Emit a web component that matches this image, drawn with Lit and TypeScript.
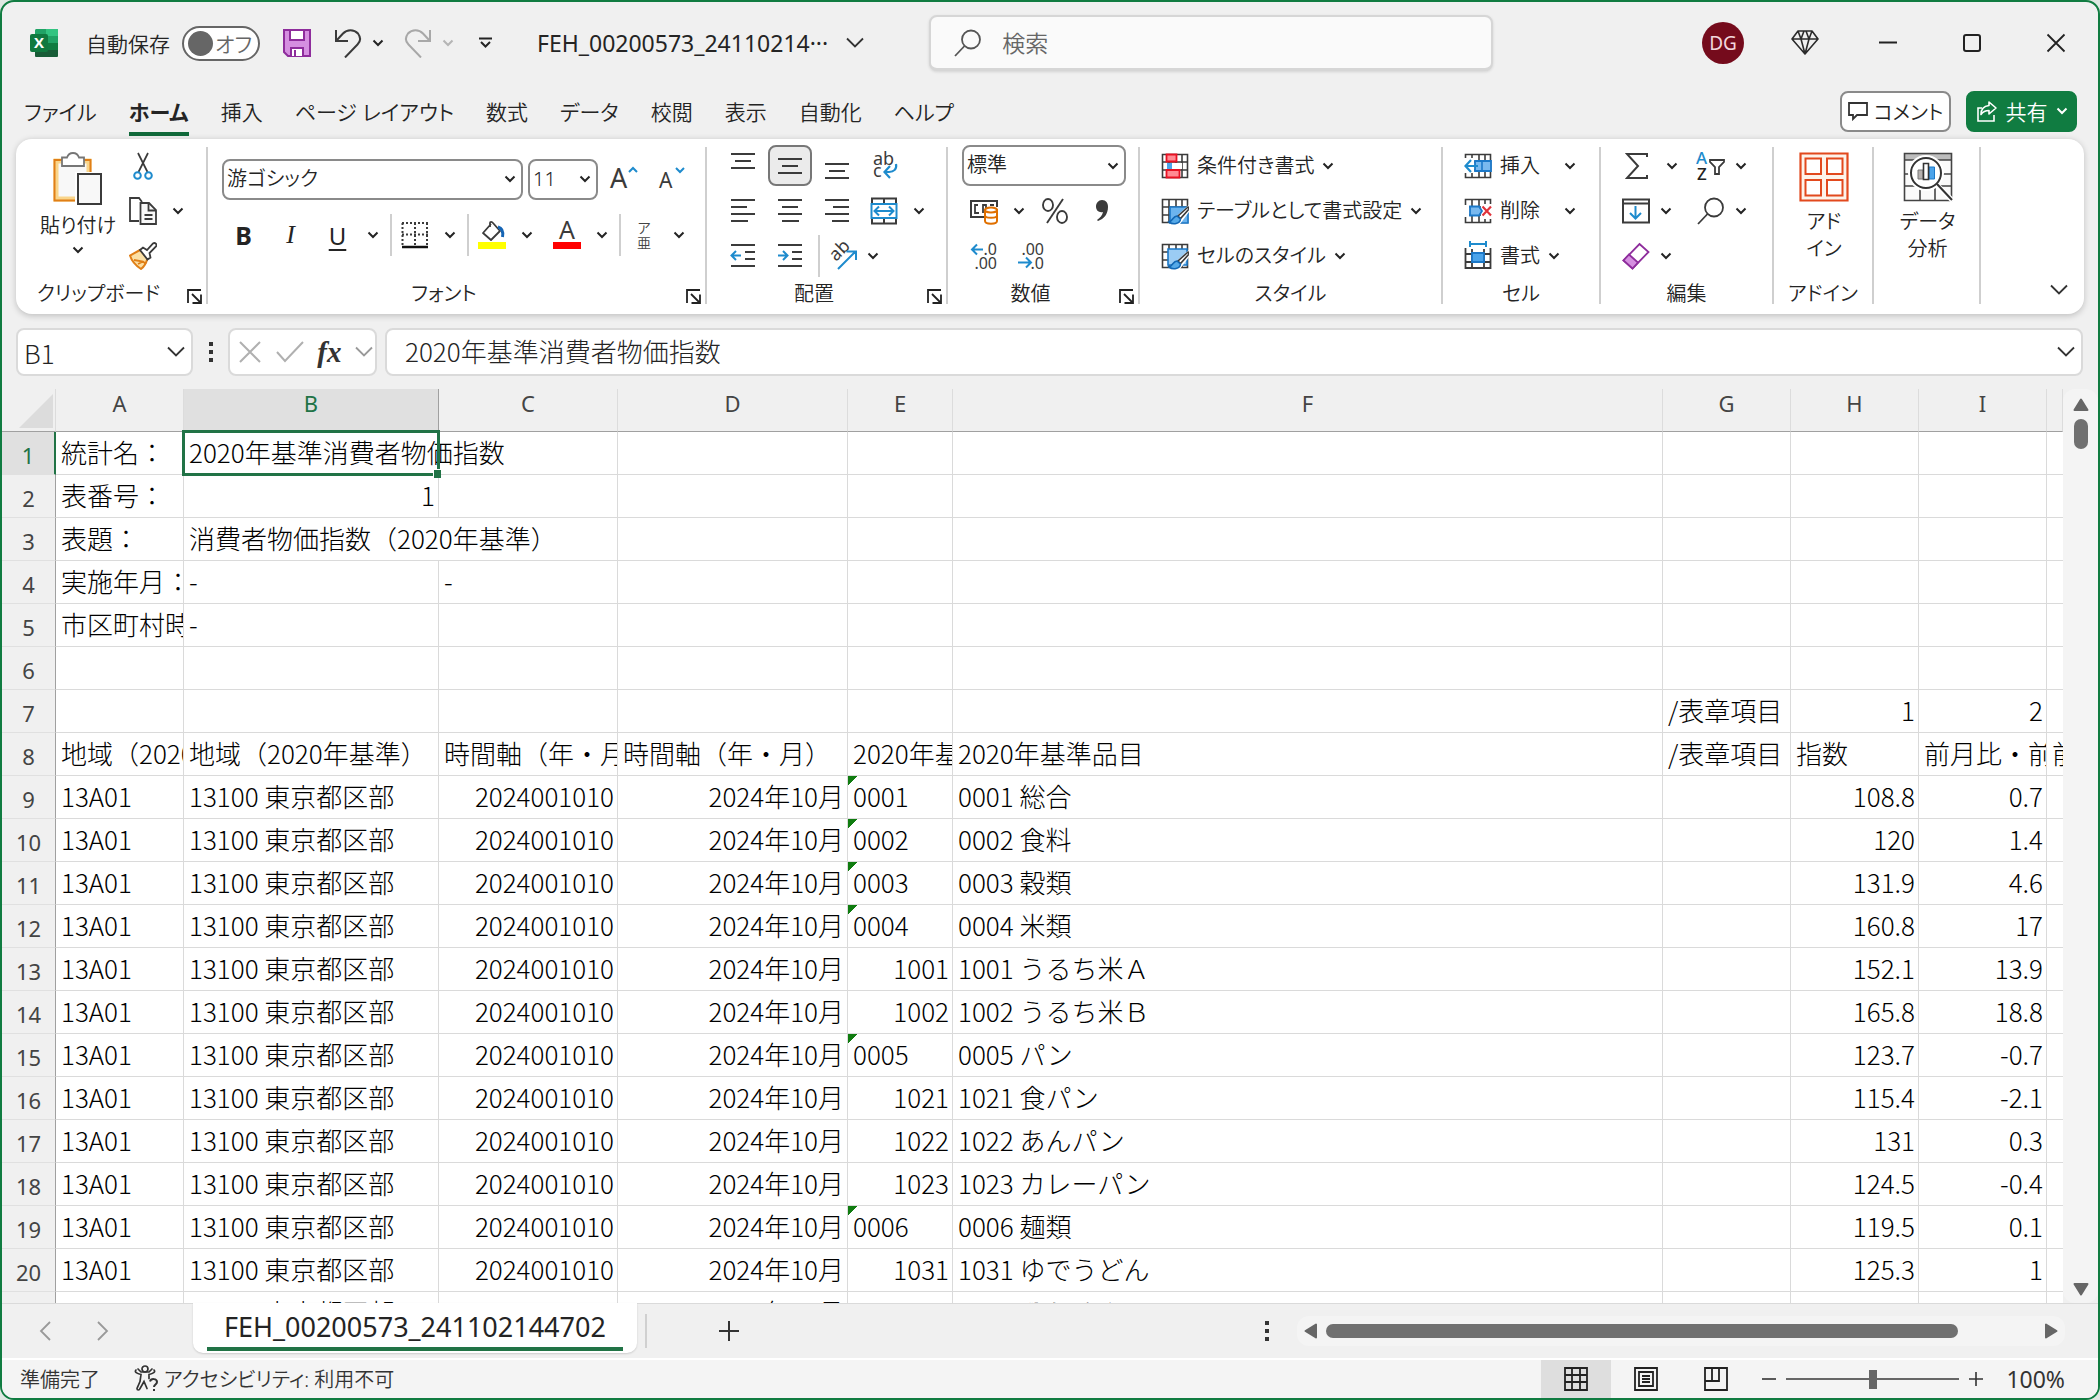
import { LitElement, html, css, svg, nothing } from "lit";
import { customElement } from "lit/decorators.js";
import { classMap } from "lit/directives/class-map.js";

const base = css`
  *, *::before, *::after { box-sizing: border-box; }
  button, input, select {
    font: inherit; color: inherit; margin: 0; padding: 0; border: 0; background: none;
    border-radius: 0; outline: none; font-feature-settings: inherit;
  }
  button { display: flex; align-items: center; justify-content: center; white-space: nowrap; }
  select { appearance: none; }
  svg { display: block; flex: none; }
`;

/* ---------- icons ---------- */
const icon = (w: number, h: number, body: unknown) =>
  html`<svg width=${w} height=${h} viewBox="0 0 ${w} ${h}" fill="none" aria-hidden="true">${body}</svg>`;

const caret = (color = "#242424") =>
  icon(12, 8, svg`<path d="M1.5 1.5 6 6l4.5-4.5" stroke=${color} stroke-width="2"/>`);
const chevron = (color = "#333") =>
  icon(18, 12, svg`<path d="M1 1.5 9 9.5l8-8" stroke=${color} stroke-width="1.8"/>`);

const K = "#3b3b3b";
const B = "#1e8bcd";

const logo = icon(28, 28, svg`
  <path d="M8 0h19a1 1 0 0 1 1 1v7H5V2a2 2 0 0 1 3-2z" fill="#21a366"/>
  <path d="M16 0h11a1 1 0 0 1 1 1v6H16z" fill="#33c481"/>
  <path d="M5 7h23v8H5z" fill="#107c41"/><path d="M16 7h12v7H16z" fill="#21a366"/>
  <path d="M5 14h23v13a1 1 0 0 1-1 1H6a1 1 0 0 1-1-1z" fill="#185c37"/>
  <path d="M16 14h12v7H16z" fill="#107c41"/>
  <rect y="5" width="18" height="18" rx="2" fill="#10793f"/>
  <text x="9" y="19" text-anchor="middle" font-family="Open Sans" font-weight="700" font-size="15" fill="#fff">X</text>`);

const save = icon(28, 28, svg`
  <path d="M1 1h26v26H5l-4-4z" fill="#d58fe0" stroke="#8e2d9c" stroke-width="2"/>
  <path d="M7 1h14v10H7z" fill="#fff" stroke="#8e2d9c" stroke-width="2"/>
  <path d="M8 27v-8h12v8" fill="#fff" stroke="#8e2d9c" stroke-width="2"/>
  <path d="M12 21v6" stroke="#8e2d9c" stroke-width="2"/>`);
const undo = icon(28, 30, svg`<path d="M2 2v11h12M2.500 12.500 9 5.500C13 1 20 1 24 5.500c3 4 2.500 8-.500 11L11 29.500" stroke="#3b3b3b" stroke-width="2"/>`);
const redo = icon(28, 30, svg`<path d="M26 2v11H14M25.500 12.500 19 5.500C15 1 8 1 4 5.500c-3 4-2.500 8 .500 11L17 29.500" stroke="#a8a8a8" stroke-width="2"/>`);
const qat = icon(14, 12, svg`<path d="M0 1.500h13" stroke="#242424" stroke-width="2"/><path d="M2 5l4.500 4.500L11 5" stroke="#242424" stroke-width="2"/>`);
const search = (c: string) => icon(28, 28, svg`<circle cx="17" cy="10.500" r="9" stroke=${c} stroke-width="1.8"/><path d="M10.500 17 1 27" stroke=${c} stroke-width="1.8"/>`);
const diamond = icon(28, 28, svg`<path d="M7 2h14l6 8-13 15L1 10zM1 10h26M7 2l3 8 4 15 4-15 3-8M10 10l3-8M18 10l-3-8" stroke="#2b2b2b" stroke-width="1.6" stroke-linejoin="round"/>`);
const minimize = icon(20, 20, svg`<path d="M1 9.500h18" stroke="#222" stroke-width="2"/>`);
const maximize = icon(20, 20, svg`<rect x="2" y="2" width="16" height="16" rx="2" stroke="#222" stroke-width="2"/>`);
const closeX = icon(20, 20, svg`<path d="M1.500 1.500l17 17M18.500 1.500l-17 17" stroke="#222" stroke-width="1.8"/>`);
const comment = icon(20, 20, svg`<path d="M1 2h18v12H9l-4 4v-4H1z" stroke="#333" stroke-width="1.8"/>`);
const share = icon(22, 22, svg`<path d="M6 8H2v13h16v-6" stroke="#fff" stroke-width="1.6"/><path d="M13 2l7 6-7 6v-3.500c-4 0-6 1-8 4 0-5 3-8.500 8-9z" stroke="#fff" stroke-width="1.6" stroke-linejoin="round"/>`);

const paste = icon(50, 54, svg`
  <path d="M3 9h33v38H3z" fill="#f8f8f8" stroke="#f9d58b" stroke-width="5"/>
  <path d="M12 8H1.500v40.500H24M28 8h9.500v12" stroke="#e07f17" stroke-width="2"/>
  <path d="M9 5.500h5C15 2.500 17 1 20 1s5 1.500 6 4.500h5V14H9z" fill="#fff" stroke="#767676" stroke-width="1.8"/>
  <path d="M22 20h27v34H22z" fill="#fff"/>
  <path d="M25 22h23v30H25z" fill="#f8f8f8" stroke="#3b3b3b" stroke-width="2"/>`);
const cut = icon(28, 28, svg`
  <path d="M9 1l9.500 19M19 1 9.500 20" stroke=${K} stroke-width="1.7"/>
  <circle cx="8.500" cy="23.500" r="3.300" stroke=${B} stroke-width="2"/><circle cx="19.500" cy="23.500" r="3.300" stroke=${B} stroke-width="2"/>`);
const copy = icon(28, 28, svg`
  <path d="M10 24H1V1h9l3 4" stroke=${K} stroke-width="1.8"/>
  <path d="M11.500 6H20l7 7v14H11.500z" fill="#f8f8f8" stroke=${K} stroke-width="1.8"/>
  <path d="M19.500 6v7.500H27M15.500 18h8M15.500 22h8" stroke=${K} stroke-width="1.8"/>`);
const painter = icon(28, 28, svg`
  <path d="M11 8 1 13.500c1.500 5 5 9.500 11 13.500 4-3 5.500-6.500 6.500-11z" fill="#fbe0a5" stroke="#e07f17" stroke-width="2"/>
  <path d="M5 18l9 1.500 3 2.500M9 22l5-2.500" stroke="#e07f17" stroke-width="1.8"/>
  <path d="M11 8l3-2.500 4 2.500 6-6.500c2-1.500 4.500 1 3 3L20.500 11l1 4.500-3 2z" fill="#fff" stroke=${K} stroke-width="1.8"/>`);
const launcher = icon(15, 15, svg`<path d="M1 14V1h13" stroke="#222" stroke-width="1.8"/><path d="M5 5l8 8M14 5.500V14H5.500" stroke="#222" stroke-width="1.8"/>`);

const growA = icon(30, 28, svg`<text x="1" y="23" font-family="Noto Sans" font-weight="400" font-size="27" fill=${K}>A</text><path d="M20 7l4-4 4 4" stroke=${B} stroke-width="2"/>`);
const shrinkA = icon(28, 28, svg`<text x="2" y="23" font-family="Noto Sans" font-weight="400" font-size="21" fill=${K}>A</text><path d="M19 3l4 4 4-4" stroke=${B} stroke-width="2"/>`);
const borders = icon(28, 28, svg`
  <path d="M1 2h26M1 13.500h26M1.500 2v22M14 2v22M26 2v22" stroke=${K} stroke-width="2" stroke-dasharray="2 2"/>
  <path d="M1 26h26" stroke="#111" stroke-width="2.500"/>`);
const fillColor = icon(28, 30, svg`
  <path d="M13 4 5 13l8 7 9-9-7-8c-1-1.500-3-1.500-3 0v4" stroke=${K} stroke-width="1.8" stroke-linejoin="round"/>
  <path d="M20 7c4 1 5.500 4 4.500 10" stroke="#1565b5" stroke-width="3"/>
  <path d="M0 22h28v7H0z" fill="#ff0"/>`);
const fontColor = icon(28, 30, svg`<text x="14" y="19" text-anchor="middle" font-family="Noto Sans" font-weight="400" font-size="25" fill=${K}>A</text><path d="M0 22h28v7H0z" fill="#f00"/>`);

const lines = (rows: [number, number, number][]) =>
  icon(26, 28, rows.map(([x, y, w]) => svg`<path d="M${x} ${y}h${w}" stroke=${K} stroke-width="2"/>`));
const topAlign = lines([[1, 2, 24], [5, 9, 16], [1, 16, 24]]);
const midAlign = lines([[1, 7, 24], [5, 14, 16], [1, 21, 24]]);
const botAlign = lines([[1, 12, 24], [5, 19, 16], [1, 26, 24]]);
const leftAlign = lines([[1, 3, 24], [1, 10, 16], [1, 17, 24], [1, 24, 17]]);
const centerAlign = lines([[1, 3, 24], [5, 10, 16], [1, 17, 24], [5, 24, 17]]);
const rightAlign = lines([[1, 3, 24], [9, 10, 16], [1, 17, 24], [8, 24, 17]]);
const indent = (arrow: string) => icon(26, 28, svg`
  <path d="M1 3h24M15 10h10M15 17h10M1 24h24" stroke=${K} stroke-width="2"/><path d=${arrow} stroke=${B} stroke-width="2"/>`);
const outdentIcon = indent("M11 13.500H2M6 9l-4.500 4.500L6 18");
const indentIcon = indent("M1 13.500h9M6 9l4.500 4.500L6 18");
const wrapText = icon(28, 30, svg`
  <text x="3" y="14" font-family="Noto Sans" font-weight="400" font-size="18" fill=${K}>ab</text>
  <text x="3" y="26" font-family="Noto Sans" font-weight="400" font-size="18" fill=${K}>c</text>
  <path d="M26 13c1 5-2 8-7 8h-4M20 15l-5.500 6 5.500 6" stroke=${B} stroke-width="2.200"/>`);
const merge = icon(28, 28, svg`
  <path d="M2 1.500h24v25H2zM14 1v6M14 21v6" stroke=${K} stroke-width="2"/>
  <path d="M1.500 7h25v14h-25z" fill="#fff" stroke=${B} stroke-width="2"/>
  <path d="M5 14h18M9 9.500 4.500 14 9 18.500M19 9.500l4.500 4.500-4.500 4.500" stroke=${B} stroke-width="2"/>`);
const orient = icon(30, 30, svg`
  <text x="8" y="21" transform="rotate(-45 8 21)" font-family="Noto Sans" font-weight="400" font-size="18" fill=${K}>ab</text>
  <path d="M10 28 27 11M18.500 10.500H28V19" stroke=${B} stroke-width="2"/>`);

const currency = icon(28, 28, svg`
  <path d="M14 20H1V4h26v6" stroke=${K} stroke-width="2"/>
  <path d="M8 8H5v8h4M13 16V8h3v3M20 8h4" stroke=${K} stroke-width="1.8"/>
  <path d="M15 13v11c0 3.500 12 3.500 12 0V13z" fill="#fff" stroke="#e07000" stroke-width="2"/>
  <ellipse cx="21" cy="13" rx="6" ry="2.500" fill="#fff" stroke="#e07000" stroke-width="2"/>
  <path d="M15 18.500c0 3 12 3 12 0" stroke="#e07000" stroke-width="2"/>`);
const percent = icon(28, 28, svg`
  <ellipse cx="7" cy="8" rx="5" ry="6" stroke=${K} stroke-width="1.900"/><ellipse cx="21" cy="20" rx="5" ry="6" stroke=${K} stroke-width="1.900"/>
  <path d="M22 2 6 26" stroke=${K} stroke-width="1.900"/>`);
const comma = icon(16, 24, svg`<path d="M8 1c4 0 6 3 6 7 0 7-4 12-10 14l-1-1c3-2 5.500-5 6-8-4 1-7-1.500-7-5.500C2 4 4.500 1 8 1z" fill=${K}/>`);
const decInc = icon(28, 30, svg`
  <text x="27" y="14" text-anchor="end" font-family="Noto Sans" font-weight="400" font-size="16" fill=${K}>.0</text>
  <text x="27" y="28" text-anchor="end" font-family="Noto Sans" font-weight="400" font-size="16" fill=${K}>.00</text>
  <path d="M13 8.500H2M7 3.500l-5 5 5 5" stroke=${B} stroke-width="2"/>`);
const decDec = icon(28, 30, svg`
  <text x="27" y="14" text-anchor="end" font-family="Noto Sans" font-weight="400" font-size="16" fill=${K}>.00</text>
  <text x="27" y="28" text-anchor="end" font-family="Noto Sans" font-weight="400" font-size="16" fill=${K}>.0</text>
  <path d="M1 21.500h13M9 16.500l5 5-5 5" stroke=${B} stroke-width="2"/>`);

const frame = svg`<path d="M1.500 2.500h25v23h-25zM1 10h26M1 18h26M8 2v24M15 2v24M21 2v24" stroke=${K} stroke-width="1.6"/>`;
const brush = svg`
  <path d="M30 6 18 17l-9 10h10l9-12z" fill="#fff"/>
  <path d="M27 10 17 19l2.500 2.500L28 12z" fill="#fff" stroke=${K} stroke-width="1.6"/>
  <path d="M16 19c-4 0-4 5-8 6 4 3 11 2 11.500-3z" fill="#55a9e8" stroke="#1267b4" stroke-width="1.6"/>`;
const condFormat = icon(28, 28, svg`
  <path d="M1 2h26v24H1z" fill="#fff"/>${frame}
  <path d="M5.500 2.500h10v7h-10zM5.500 18h13v7.500h-13z" fill="#ff8a93" stroke="#e81123" stroke-width="1.8"/>
  <path d="M6 11h5v6H6z" fill="#4aa3ea"/><path d="M12 11h9v6h-9z" fill="#fff"/>`);
const tableFormat = icon(28, 28, svg`${frame}<path d="M9 10h18v16H9z" fill="#6cb4ee" stroke="#1b78c8" stroke-width="1.6"/>${brush}`);
const cellStyles = icon(28, 28, svg`${frame}<path d="M7 7h19v16H7z" fill="#9bccf4" stroke="#1b78c8" stroke-width="1.6"/>${brush}`);
const insertCells = icon(28, 28, svg`${frame}
  <path d="M11 9h16v10H11z" fill="#79b9ef" stroke="#1b78c8" stroke-width="1.8"/><path d="M18 9v10" stroke="#1b78c8" stroke-width="1.6"/>
  <path d="M0 6h10v15H0z" fill="#fff"/><path d="M14 14H1.500M7 8l-5.500 6L7 20" stroke=${B} stroke-width="2.200"/>`);
const deleteCells = icon(28, 28, svg`${frame}<path d="M0 8h5v12H0zM17 7h11v15H17z" fill="#fff"/>
  <path d="M6 9.500h9l3 4.500-3 4.500H6z" fill="#79b9ef" stroke="#1b78c8" stroke-width="1.8"/>
  <path d="M18.500 9.500l8.500 9M27 9.500l-8.500 9" stroke="#e0343c" stroke-width="2.200"/>`);
const formatCells = icon(28, 30, svg`
  <path d="M1.500 7v20h25V7M1 13h26M1 21h26M8 8v20M20 8v20" stroke=${K} stroke-width="1.8"/>
  <path d="M8 12h12v9H8z" fill="#4aa3ea" stroke="#1b78c8" stroke-width="1.8"/>
  <path d="M6 3h16M6 0v6M22 0v6" stroke=${B} stroke-width="2"/>`);

const sigma = icon(24, 28, svg`<path d="M22 5V2H2l11 12L2 26h20v-3" stroke=${K} stroke-width="2"/>`);
const sortFilter = icon(30, 30, svg`
  <text x="0" y="13" font-family="Noto Sans" font-weight="500" font-size="17" fill=${B}>A</text>
  <text x="1" y="29" font-family="Noto Sans" font-weight="500" font-size="17" fill="#222">Z</text>
  <path d="M14 9h14v2l-5 5v7h-4v-7l-5-5z" stroke=${K} stroke-width="1.8"/>`);
const fillDown = icon(28, 28, svg`<path d="M1 2.500h26v23H1zM1 6.500h26" stroke=${K} stroke-width="2"/><path d="M13.500 9v12M8 16l5.500 5.500L19 16" stroke=${B} stroke-width="2"/>`);
const eraser = icon(28, 28, svg`
  <path d="M17.500 2 26.500 10 10.500 26.500 1.500 18.500z" fill="#fff" stroke="#8e2d9c" stroke-width="1.8"/>
  <path d="M7 12.500 16 20.500 10.500 26.500 1.500 18.500z" fill="#d58fe0" stroke="#8e2d9c" stroke-width="1.8"/>`);
const addin = icon(50, 50, svg`
  <path d="M1.500 1.500h47v47h-47z" fill="#fdf3ea" stroke="#e2491d" stroke-width="2.200"/>
  <path d="M6.500 6.500h15.500v15.500H6.500zM28 6.500h15.500v15.500H28zM6.500 28h15.500v15.500H6.500zM28 28h15.500v15.500H28z" fill="#fff" stroke="#e2491d" stroke-width="2"/>`);
const analyze = icon(50, 50, svg`
  <path d="M1 1h48v48H1z" fill="#fafafa"/><path d="M1 1h48v7H1z" fill="#bdbdbd"/>
  <path d="M1.500 1.500h47v47h-47zM1 8h48M1 22h48M1 34h48M17 34v14M32 34v14" stroke="#444" stroke-width="1.6"/>
  <circle cx="23" cy="21" r="18" fill="#fff"/>
  <circle cx="23" cy="21" r="15" fill="#fff" stroke="#333" stroke-width="2"/>
  <path d="M15 18h5v9h-5z" fill="#b5b0ae" stroke="#777"/><path d="M26 15h5.500v12H26z" fill="#4aa3ea" stroke="#1b78c8"/>
  <path d="M20.500 11.500h5v16h-5z" fill="#fff" stroke="#333" stroke-width="1.6"/>
  <path d="M34 33 50 49" stroke="#fff" stroke-width="5"/><path d="M34 32 49 48" stroke="#333" stroke-width="2"/>`);

/* ---------- ribbon ---------- */
const btn = (cls: string, label: string, body: unknown) =>
  html`<button class=${cls} type="button" aria-label=${label}>${body}</button>`;
const drop = (label: string) => btn("drop", `${label}のオプション`, caret());

@customElement("ribbon-bar")
export class RibbonBar extends LitElement {
  static styles = [base, css`
    :host { display: flex; background: #fff; border-radius: 16px; box-shadow: 0 2px 6px rgba(0, 0, 0, .2); border-top: 1px solid #e0e0e0; padding: 4px 0 0; height: 176px; font-size: 20px; color: #242424; }
    .group { position: relative; display: flex; flex-direction: column; flex: none; }
    .group::after { content: ""; position: absolute; right: 0; top: 4px; bottom: 10px; width: 2px; background: #cfcfcf; }
    .rows { display: grid; grid-template-rows: repeat(3, 45px); padding-left: 12px; }
    .rows.two { grid-template-rows: repeat(2, 56px); padding-top: 8px; height: 135px; }
    .rows.flush { padding-left: 0; }
    .row { display: flex; align-items: center; }
    .foot { display: flex; align-items: center; height: 36px; padding-right: 6px; }
    .name { flex: 1; text-align: center; line-height: 28px; padding: 0 6px 4px 0; white-space: nowrap; }
    .foot.plain { padding: 0; }
    .plain .name { padding-right: 2px; }
    .clip { width: 192px; } .font { width: 499px; } .align { width: 241px; } .number { width: 192px; }
    .style { width: 303px; } .cells { width: 158px; } .edit { width: 173px; } .addin { width: 100px; } .data { width: 107px; }
    .slot { width: 47px; height: 41px; } .icon { width: 36px; height: 41px; } .drop { width: 24px; height: 41px; }
    .on { width: 44px; margin: 0 1px 0 2px; border: 2px solid #777; border-radius: 8px; background: #ebebeb; }
    .bar { width: 2px; height: 42px; background: #cfcfcf; margin: 0 5px; }
    .split { display: flex; gap: 5px; }
    .shift { margin-left: 10px; }
    .b { font-weight: 700; font-size: 25px; } .i { font: italic 26px "Liberation Serif", serif; } .u { font-size: 24px; font-weight: 400; text-decoration: underline; text-underline-offset: 4px; }
    .field { display: grid; align-items: center; height: 41px; border: 2px solid #8a8a8a; border-radius: 8px; background: #fff; }
    .field select { grid-area: 1 / 1; padding: 0 0 2px 3px; height: 37px; }
    .field svg { grid-area: 1 / 1; justify-self: end; margin-right: 5px; pointer-events: none; }
    .face { width: 301px; margin-left: 2px; } .size { width: 70px; margin: 0 2px 0 5px; } .format { width: 164px; margin-left: 2px; }
    .paste-area { display: flex; padding-left: 20px; gap: 5px; }
    .paste { flex-direction: column; width: 84px; height: 135px; justify-content: flex-start; padding-top: 9px; line-height: 32px; gap: 4px; }
    .ruby { flex-direction: column; line-height: 15px; font-size: 14px; color: #444; }
    .cmds { padding-left: 21px; }
    .cmd { gap: 8px; height: 41px; }
    .cmd span { padding-bottom: 3px; }
    .far { margin-left: 18px; }
    .pair { display: grid; grid-template-columns: 80px 60px; align-items: center; }
    .near { padding-left: 5px; }
    .big { flex-direction: column; justify-content: flex-start; white-space: normal; height: 135px; padding-top: 9px; line-height: 27px; }
    .big span { margin-top: 6px; }
    .end { flex: 1; display: flex; justify-content: flex-end; align-items: flex-end; padding: 0 16px 18px 0; }
  `];

  private foot(name: string, launch = true) {
    return html`<div class=${classMap({ foot: true, plain: !launch })}><span class="name">${name}</span>
      ${launch ? btn("", `${name}の設定`, launcher) : nothing}</div>`;
  }

  render() {
    return html`
      <section class="group clip">
        <div class="paste-area">
          <button class="paste" type="button">${paste}<span>貼り付け</span>${caret()}</button>
          <div class="rows flush">
            <div class="row">${btn("icon", "切り取り", cut)}</div>
            <div class="row split">${btn("icon", "コピー", copy)}${drop("コピー")}</div>
            <div class="row">${btn("icon", "書式のコピー", painter)}</div>
          </div>
        </div>
        ${this.foot("クリップボード")}
      </section>
      <section class="group font">
        <div class="rows two">
          <div class="row">
            <div class="field face"><select aria-label="フォント名"><option>游ゴシック</option></select>${caret()}</div>
            <div class="field size"><select aria-label="フォント サイズ"><option>11</option></select>${caret()}</div>
            ${btn("slot", "拡大", growA)}${btn("slot", "縮小", shrinkA)}
          </div>
          <div class="row">
            ${btn("slot b", "太字", "B")}${btn("slot i", "斜体", "I")}${btn("slot u", "下線", "U")}${drop("下線")}
            <span class="bar"></span>
            <span class="split">${btn("icon", "罫線", borders)}${drop("罫線")}</span><span class="bar"></span>
            <span class="split">${btn("icon", "塗りつぶし", fillColor)}${drop("塗りつぶし")}</span>
            <span class="split shift">${btn("icon", "文字色", fontColor)}${drop("文字色")}</span><span class="bar"></span>
            <span class="split">${btn("icon ruby", "ふりがな", html`<span>ア</span><span>亜</span>`)}${drop("ふりがな")}</span>
          </div>
        </div>
        ${this.foot("フォント")}
      </section>
      <section class="group align">
        <div class="rows">
          <div class="row">${btn("slot", "上揃え", topAlign)}${btn("slot on", "中央", midAlign)}${btn("slot", "下揃え", botAlign)}${btn("slot", "折り返し", wrapText)}</div>
          <div class="row">${btn("slot", "左揃え", leftAlign)}${btn("slot", "中央揃え", centerAlign)}${btn("slot", "右揃え", rightAlign)}${btn("slot", "結合", merge)}${drop("結合")}</div>
          <div class="row">${btn("slot", "字下げ解除", outdentIcon)}${btn("slot", "字下げ", indentIcon)}<span class="bar"></span>${btn("icon", "方向", orient)}${drop("方向")}</div>
        </div>
        ${this.foot("配置")}
      </section>
      <section class="group number">
        <div class="rows">
          <div class="row"><div class="field format"><select aria-label="表示形式"><option>標準</option></select>${caret()}</div></div>
          <div class="row">${btn("slot", "通貨", currency)}${drop("通貨")}${btn("slot", "パーセント", percent)}${btn("slot", "桁区切り", comma)}</div>
          <div class="row">${btn("slot", "小数点以下を増やす", decInc)}${btn("slot", "小数点以下を減らす", decDec)}</div>
        </div>
        ${this.foot("数値")}
      </section>
      <section class="group style">
        <div class="rows cmds">
          <div class="row"><button class="cmd" type="button">${condFormat}<span>条件付き書式</span>${caret()}</button></div>
          <div class="row"><button class="cmd" type="button">${tableFormat}<span>テーブルとして書式設定</span>${caret()}</button></div>
          <div class="row"><button class="cmd" type="button">${cellStyles}<span>セルのスタイル</span>${caret()}</button></div>
        </div>
        ${this.foot("スタイル", false)}
      </section>
      <section class="group cells">
        <div class="rows cmds">
          <div class="row"><button class="cmd" type="button">${insertCells}<span>挿入</span></button><span class="far">${drop("挿入")}</span></div>
          <div class="row"><button class="cmd" type="button">${deleteCells}<span>削除</span></button><span class="far">${drop("削除")}</span></div>
          <div class="row"><button class="cmd" type="button">${formatCells}<span>書式</span>${caret()}</button></div>
        </div>
        ${this.foot("セル", false)}
      </section>
      <section class="group edit">
        <div class="rows">
          <div class="pair"><div class="row">${btn("slot", "合計", sigma)}${drop("合計")}</div><div class="row">${btn("icon", "並べ替え", sortFilter)}${drop("並べ替え")}</div></div>
          <div class="pair"><div class="row near">${btn("icon", "フィル", fillDown)}${drop("フィル")}</div><div class="row">${btn("icon", "検索", search(K))}${drop("検索")}</div></div>
          <div class="pair"><div class="row near">${btn("icon", "クリア", eraser)}${drop("クリア")}</div></div>
        </div>
        ${this.foot("編集", false)}
      </section>
      <section class="group addin">
        <button class="big" type="button">${addin}<span>アド<br>イン</span></button>
        ${this.foot("アドイン", false)}
      </section>
      <section class="group data">
        <button class="big" type="button">${analyze}<span>データ<br>分析</span></button>
      </section>
      <div class="end">${btn("", "リボンを折りたたむ", chevron())}</div>`;
  }
}

/* ---------- worksheet ---------- */
type Row = (string | number)[];
const HEADS = ["A", "B", "C", "D", "E", "F", "G", "H", "I", ""];
const item = (code: string, name: string, index: number, rate: number): Row => [
  "13A01", "13100 東京都区部", 2024001010, "2024年10月", code.startsWith("0") ? code : Number(code), `${code} ${name}`, "", index, rate, "",
];
const ROWS: Row[] = [
  ["統計名：", "2020年基準消費者物価指数", "", "", "", "", "", "", "", ""],
  ["表番号：", 1, "", "", "", "", "", "", "", ""],
  ["表題：", "消費者物価指数（2020年基準）", "", "", "", "", "", "", "", ""],
  ["実施年月：", "-", "-", "", "", "", "", "", "", ""],
  ["市区町村時", "-", "", "", "", "", "", "", "", ""],
  ["", "", "", "", "", "", "", "", "", ""],
  ["", "", "", "", "", "", "/表章項目", 1, 2, ""],
  ["地域（2020", "地域（2020年基準）", "時間軸（年・月", "時間軸（年・月）", "2020年基", "2020年基準品目", "/表章項目", "指数", "前月比・前", "前"],
  item("0001", "総合", 108.8, 0.7),
  item("0002", "食料", 120, 1.4),
  item("0003", "穀類", 131.9, 4.6),
  item("0004", "米類", 160.8, 17),
  item("1001", "うるち米Ａ", 152.1, 13.9),
  item("1002", "うるち米Ｂ", 165.8, 18.8),
  item("0005", "パン", 123.7, -0.7),
  item("1021", "食パン", 115.4, -2.1),
  item("1022", "あんパン", 131, 0.3),
  item("1023", "カレーパン", 124.5, -0.4),
  item("0006", "麺類", 119.5, 0.1),
  item("1031", "ゆでうどん", 125.3, 1),
  ["13A01", "13100 東京都区部", 2024001010, "2024年10月", 1041, "1041 そうめん", "", "", "", ""],
];

@customElement("sheet-grid")
export class SheetGrid extends LitElement {
  static styles = [base, css`
    :host { display: flex; min-height: 0; overflow: hidden; }
    .pane { flex: 1; min-width: 0; overflow: hidden; }
    table { table-layout: fixed; width: 100%; border-collapse: separate; border-spacing: 0; background: #fff; font-family: "Noto Sans CJK JP", sans-serif; font-weight: 300; font-size: 26px; font-feature-settings: normal; color: #000; }
    .c0 { width: 54px; } .c1, .c7, .c8, .c9 { width: 128px; } .c2 { width: 255px; } .c3 { width: 179px; }
    .c4 { width: 230px; } .c5 { width: 105px; } .c6 { width: 710px; }
    th { font-family: "Noto Sans", sans-serif; font-weight: 400; font-size: 22px; color: #444; background: #f0f0f0; padding: 0; }
    thead th { height: 43px; line-height: 28px; vertical-align: top; border-right: 1px solid #dcdcdc; border-bottom: 1px solid #a0a0a0; }
    thead th.sel { background: #e0e0e0; color: #217346; border-right-color: #a0a0a0; border-bottom-color: #217346; }
    tbody th { line-height: 38px; padding-top: 4px; border-right: 1px solid #a0a0a0; border-bottom: 1px solid #e0e0e0; }
    tbody th.sel { background: #e0e0e0; color: #217346; border-right: 2px solid #217346; }
    td { height: 43px; line-height: 40px; padding: 0 3px 2px 5px; border-right: 1px solid #dadada; border-bottom: 1px solid #dadada; white-space: nowrap; overflow: hidden; }
    td:last-child { border-right: 0; }
    .num { text-align: right; }
    .active { position: relative; overflow: visible; }
    .ring { position: absolute; inset: -2px; border: 3px solid #217346; pointer-events: none; }
    .handle { position: absolute; right: -4px; bottom: -5px; width: 8px; height: 9px; background: #217346; border: 1px solid #fff; border-width: 1px 0 0 1px; }
    .flag { background: linear-gradient(135deg, #107c10 7px, transparent 7px) no-repeat; }
    .corner svg { margin: 4px 0 0 16px; }
    .scroll { width: 35px; flex: none; display: flex; flex-direction: column; align-items: center; background: #f4f4f4; border-radius: 12px; padding: 9px 0 7px; gap: 8px; }
    .thumb { width: 14px; height: 30px; border-radius: 7px; background: #707070; }
    .space { flex: 1; }
  `];

  private cell(row: Row, r: number, c: number) {
    const v = row[c];
    if (r === 2 && c === 2) return nothing;
    const active = r === 0 && c === 1;
    const num = typeof v === "number" || (c === 3 && r > 7);
    const flag = c === 4 && typeof v === "string" && v.startsWith("0");
    return html`<td colspan=${r === 2 && c === 1 ? 2 : 1} class=${classMap({ active, num, flag })}>${v}${active
      ? html`<span class="ring"><span class="handle"></span></span>` : nothing}</td>`;
  }

  render() {
    return html`
      <div class="pane"><table>
        <colgroup>${[0, ...HEADS].map((_, i) => html`<col class="c${i}">`)}</colgroup>
        <thead><tr><th class="corner" aria-label="すべて選択">${icon(36, 36, svg`<path d="M35 1v34H1z" fill="#dcdcdc"/>`)}</th>
          ${HEADS.map((h) => html`<th scope="col" class=${classMap({ sel: h === "B" })}>${h}</th>`)}</tr></thead>
        <tbody>${ROWS.map((row, r) => html`<tr><th scope="row" class=${classMap({ sel: r === 0 })}>${r < 20 ? r + 1 : ""}</th>${row.map((_, c) => this.cell(row, r, c))}</tr>`)}</tbody>
      </table></div>
      <div class="scroll">
        ${icon(16, 13, svg`<path d="M8 1.500 14.500 12h-13z" fill="#666" stroke="#666" stroke-width="2" stroke-linejoin="round"/>`)}
        <div class="thumb"></div><div class="space"></div>
        ${icon(16, 13, svg`<path d="M8 11.500 14.500 1h-13z" fill="#666" stroke="#666" stroke-width="2" stroke-linejoin="round"/>`)}
      </div>`;
  }
}

/* ---------- status bar ---------- */
@customElement("status-bar")
export class StatusBar extends LitElement {
  static styles = [base, css`
    :host { display: flex; align-items: stretch; height: 40px; border-top: 2px solid #fff; background: #f4f4f4; font-size: 20px; color: #333; padding: 0 33px 0 18px; }
    .text { display: flex; align-items: center; gap: 4px; margin-right: 34px; padding-bottom: 2px; white-space: nowrap; }
    .space { flex: 1; }
    .view { width: 70px; }
    .view.on { background: #dedede; }
    .zoom { display: flex; align-items: center; gap: 10px; margin-left: 11px; }
    input { appearance: none; width: 173px; height: 20px; background: linear-gradient(#666, #666) center / 100% 2px no-repeat; }
    input::-webkit-slider-thumb { appearance: none; width: 8px; height: 19px; background: #666; }
    .pct { margin-left: 23px; align-self: center; font-size: 23px; font-weight: 400; }
  `];
  render() {
    return html`
      <span class="text">準備完了</span>
      <span class="text">${icon(26, 26, svg`
        <circle cx="11" cy="4" r="3" stroke="#333" stroke-width="1.700"/>
        <path d="M2 5c-2 2 1 3.500 5 4.500l-1 7-3 7c0 2 2.500 2 3 0l4-7 3 7M20 5c2 2-1 3.500-5 4.500l0 4M4 4l3 3h8l3-3" stroke="#333" stroke-width="1.700" stroke-linecap="round"/>
        <path d="M16 16.500c1-3.500 7-3 7 .500 0 2.500-3 2.500-3 5M20 24v2" stroke="#333" stroke-width="2"/>`)}アクセシビリティ: 利用不可</span>
      <span class="space"></span>
      ${btn("view on", "標準", icon(24, 24, svg`<path d="M1 1h22v22H1zM1 8h22M1 15h22M8 1v22M16 1v22" stroke="#222" stroke-width="1.800"/>`))}
      ${btn("view", "ページ レイアウト", icon(24, 24, svg`<path d="M1 1h22v22H1zM5 5h14v14H5zM8 9h8M8 12h8M8 15h8" stroke="#222" stroke-width="1.800"/>`))}
      ${btn("view", "改ページ プレビュー", icon(24, 24, svg`<path d="M1 1h22v22H1zM1 14h14V1M8 1v13" stroke="#222" stroke-width="1.800"/>`))}
      <div class="zoom">
        ${btn("", "縮小", icon(14, 14, svg`<path d="M0 7h14" stroke="#333" stroke-width="1.600"/>`))}
        <input type="range" min="0" max="200" value="100" aria-label="ズーム">
        ${btn("", "拡大", icon(14, 14, svg`<path d="M0 7h14M7 0v14" stroke="#333" stroke-width="1.600"/>`))}
      </div>
      <span class="pct">100%</span>`;
  }
}

/* ---------- application window ---------- */
const TABS = ["ファイル", "ホーム", "挿入", "ページ レイアウト", "数式", "データ", "校閲", "表示", "自動化", "ヘルプ"];
const dots = icon(4, 20, svg`<path d="M0 0h4v4H0zM0 8h4v4H0zM0 16h4v4H0z" fill="#333"/>`);

@customElement("app-root")
export class AppRoot extends LitElement {
  static styles = [base, css`
    :host { display: block; background: #dfe7e2; font-family: "Noto Sans", "Noto Sans CJK JP", sans-serif; font-weight: 350; font-feature-settings: "palt"; color: #242424; }
    .window { display: flex; flex-direction: column; height: 100vh; border: 2px solid #107c41; border-radius: 14px; background: #f0f0f0; overflow: hidden; font-size: 21px; }
    .title { display: flex; align-items: center; height: 82px; flex: none; padding: 0 32px 0 28px; }
    .auto { display: flex; align-items: center; gap: 12px; margin: 0 23px 0 28px; }
    .switch { display: grid; align-items: center; width: 78px; height: 35px; border: 2px solid #666; border-radius: 18px; background: #fff; color: #666; }
    .switch input { appearance: none; grid-area: 1 / 1; width: 25px; height: 25px; margin-left: 4px; border-radius: 50%; background: #666; }
    .switch span { grid-area: 1 / 1; justify-self: end; margin-right: 6px; }
    .history { display: flex; align-items: center; gap: 10px; margin-left: 23px; }
    .history + .history { margin-left: 20px; }
    .more { margin: 0 44px 0 25px; }
    .doc { font-size: 23px; font-weight: 400; gap: 18px; flex: none; margin-right: 65px; }
    .search { flex: 0 1 564px; display: flex; align-items: center; height: 56px; padding-left: 23px; gap: 20px; border: 2px solid #d6d6d6; border-bottom-width: 3px; border-radius: 8px; background: #fafafa; font-size: 23px; box-shadow: 0 1px 3px rgba(0, 0, 0, .12); }
    .search input { flex: 1; min-width: 0; }
    .search input::placeholder { color: #666; opacity: 1; }
    .space { flex: 1; }
    .avatar { width: 42px; height: 42px; border-radius: 50%; background: #750b1c; color: #f2d7dc; font-size: 19px; font-weight: 400; margin-right: 47px; }
    .caption { display: flex; gap: 64px; margin-left: 59px; }
    nav { display: flex; align-items: center; height: 54px; flex: none; padding: 0 21px 0 22px; gap: 32px; font-size: 21px; }
    nav button { height: 49px; border-bottom: 4px solid transparent; border-top: 4px solid transparent; }
    nav .on { font-weight: 700; border-bottom-color: #10693a; }
    nav .comment, nav .share { height: 41px; border: 2px solid #8a8a8a; border-radius: 8px; background: #fff; width: 111px; gap: 6px; font-size: 20px; }
    nav .share { border-color: #107c41; background: #107c41; color: #fff; margin-left: -17px; gap: 8px; font-size: 21px; }
    ribbon-bar { flex: none; margin: 0 14px; }
    .formula { display: flex; height: 48px; flex: none; margin: 14px 15px 13px 14px; gap: 8px; font-family: "Noto Sans CJK JP", sans-serif; font-weight: 300; font-size: 26px; font-feature-settings: normal; }
    .box { display: flex; align-items: center; border: 2px solid #dadada; border-radius: 8px; background: #fff; padding: 0 6px; }
    .box input { flex: 1; min-width: 0; height: 44px; }
    .name { width: 177px; }
    .grip { display: flex; align-items: center; width: 19px; justify-content: center; }
    .fx { width: 149px; justify-content: space-between; padding: 0 2px 0 8px; }
    .fxmark { font: italic 700 29px "Liberation Serif", serif; color: #333; }
    .entry { flex: 1; padding-left: 18px; }
    .entry input { padding-bottom: 4px; }
    sheet-grid { flex: 1; }
    .sheets { display: flex; align-items: center; height: 55px; flex: none; border-top: 1px solid #dadada; }
    .arrows { display: flex; gap: 46px; width: 191px; padding-left: 37px; }
    .tab { align-self: flex-start; margin-top: -1px; height: 50px; padding: 0 14px; background: #fff; border-radius: 0 0 10px 10px; font-size: 27px; font-weight: 400; box-shadow: 0 1px 2px rgba(0, 0, 0, .15); }
    .tab span { height: 45px; line-height: 42px; padding: 0 17px; border-bottom: 4px solid #217346; }
    .rule { width: 2px; height: 34px; background: #d0d0d0; margin: 0 72px 0 8px; }
    .hscroll { display: flex; align-items: center; gap: 9px; flex: 0 1 768px; height: 30px; margin: 0 33px 0 28px; padding: 0 7px; border-radius: 12px; background: #f4f4f4; }
    .track { flex: 1; }
    .hthumb { width: 89%; height: 14px; border-radius: 7px; background: #707070; }
    status-bar { flex: none; }
  `];

  render() {
    return html`
      <div class="window">
        <header class="title">
          ${logo}
          <label class="auto"><span>自動保存</span><span class="switch"><input type="checkbox" role="switch"><span>オフ</span></span></label>
          ${btn("", "上書き保存", save)}
          <span class="history">${btn("", "元に戻す", undo)}${btn("", "元に戻すの履歴", caret())}</span>
          <span class="history">${btn("", "やり直し", redo)}${btn("", "やり直しの履歴", caret("#b5b5b5"))}</span>
          ${btn("more", "クイック アクセス", qat)}
          <button class="doc" type="button"><span>FEH_00200573_24110214···</span>${chevron()}</button>
          <label class="search">${search("#555")}<input type="search" aria-label="検索" placeholder="検索"></label>
          <span class="space"></span>
          <button class="avatar" type="button">DG</button>
          ${btn("", "プレミアム", diamond)}
          <span class="caption">${btn("", "最小化", minimize)}${btn("", "最大化", maximize)}${btn("", "閉じる", closeX)}</span>
        </header>
        <nav>
          ${TABS.map((t) => html`<button type="button" class=${classMap({ on: t === "ホーム" })}>${t}</button>`)}
          <span class="space"></span>
          <button class="comment" type="button">${comment}コメント</button>
          <button class="share" type="button">${share}共有${caret("#fff")}</button>
        </nav>
        <ribbon-bar></ribbon-bar>
        <div class="formula">
          <div class="box name"><input aria-label="名前ボックス" value="B1">${btn("", "名前の一覧", chevron())}</div>
          <span class="grip">${dots}</span>
          <div class="box fx">
            ${btn("", "キャンセル", icon(24, 24, svg`<path d="M2 2l20 20M22 2 2 22" stroke="#b0b0b0" stroke-width="2"/>`))}
            ${btn("", "入力", icon(28, 24, svg`<path d="M1 12l8 9L27 2" stroke="#b0b0b0" stroke-width="2"/>`))}
            ${btn("fxmark", "関数の挿入", "fx")}
            ${btn("", "関数の履歴", chevron("#999"))}
          </div>
          <div class="box entry"><input aria-label="数式バー" value="2020年基準消費者物価指数">${btn("", "数式バーの展開", chevron())}</div>
        </div>
        <sheet-grid></sheet-grid>
        <div class="sheets">
          <span class="arrows">
            ${btn("", "前のシート", icon(12, 20, svg`<path d="M11 1 2 10l9 9" stroke="#999" stroke-width="1.800"/>`))}
            ${btn("", "次のシート", icon(12, 20, svg`<path d="M1 1l9 9-9 9" stroke="#999" stroke-width="1.800"/>`))}
          </span>
          <button class="tab" type="button"><span>FEH_00200573_241102144702</span></button>
          <span class="rule"></span>
          ${btn("", "新しいシート", icon(20, 20, svg`<path d="M0 10h20M10 0v20" stroke="#333" stroke-width="2"/>`))}
          <span class="space"></span>
          ${dots}
          <div class="hscroll">
            ${icon(13, 16, svg`<path d="M1.500 8 12 1.500v13z" fill="#666" stroke="#666" stroke-width="2" stroke-linejoin="round"/>`)}
            <div class="track"><div class="hthumb"></div></div>
            ${icon(13, 16, svg`<path d="M11.500 8 1 1.500v13z" fill="#666" stroke="#666" stroke-width="2" stroke-linejoin="round"/>`)}
          </div>
        </div>
        <status-bar></status-bar>
      </div>`;
  }
}
